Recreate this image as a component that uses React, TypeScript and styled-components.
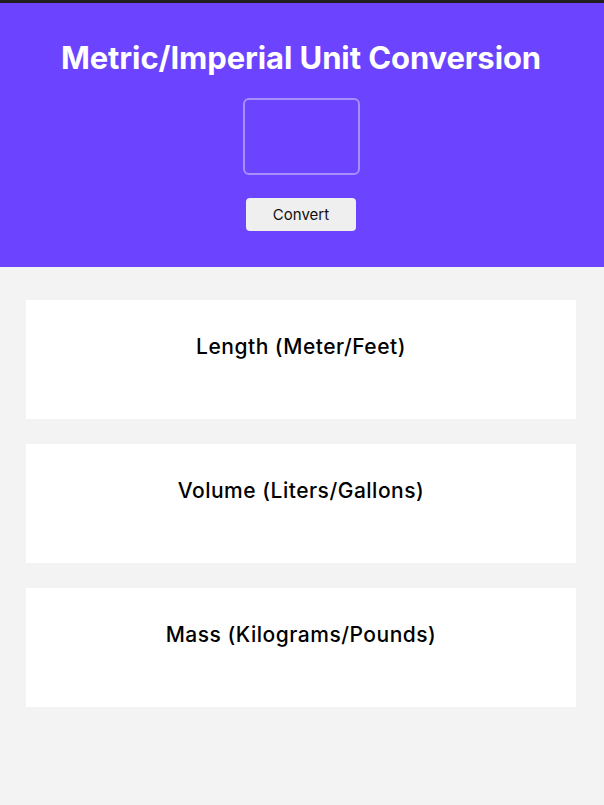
import React from "react";
import styled, { createGlobalStyle } from "styled-components";

const Global = createGlobalStyle`
  html, body { margin: 0; padding: 0; background: #f3f3f3; }
  body { font-family: Inter, "Noto Sans", sans-serif; }
  * { box-sizing: border-box; }
`;

const TopBar = styled.div`
  height: 3px;
  background: #1f1f1f;
`;

const Header = styled.header`
  background: #6c43ff;
  padding: 36px 2px 36px 0;
  display: flex;
  flex-direction: column;
  align-items: center;
`;

const Title = styled.h1`
  margin: 0;
  color: #fff;
  font-family: Inter, sans-serif;
  font-weight: 700;
  font-size: 31px;
  line-height: 37px;
  letter-spacing: -0.1px;
`;

const Input = styled.input`
  margin-top: 22px;
  width: 117px;
  height: 77px;
  background: transparent;
  border: 2px solid rgba(255, 255, 255, 0.4);
  border-radius: 6px;
  outline: none;
  color: #fff;
  font-size: 20px;
  text-align: center;
`;

const Button = styled.button`
  margin-top: 23px;
  width: 110px;
  height: 33px;
  background: #efefef;
  border: none;
  border-radius: 4px;
  font-family: Inter, sans-serif;
  font-size: 15px;
  color: #111;
`;

const Main = styled.main`
  padding: 33px 28px 60px 26px;
  display: flex;
  flex-direction: column;
  gap: 25px;
`;

const Card = styled.section`
  background: #fff;
  height: 119px;
  padding-top: 34px;
  display: flex;
  flex-direction: column;
  align-items: center;
`;

const CardTitle = styled.h2`
  margin: 0;
  font-family: Inter, sans-serif;
  font-weight: 450;
  font-size: 21px;
  line-height: 25px;
  letter-spacing: 0.5px;
  color: #000;
`;

const cards = [
  "Length (Meter/Feet)",
  "Volume (Liters/Gallons)",
  "Mass (Kilograms/Pounds)",
];

export default function App() {
  return (
    <>
      <Global />
      <TopBar />
      <Header>
        <Title>Metric/Imperial Unit Conversion</Title>
        <Input type="text" />
        <Button>Convert</Button>
      </Header>
      <Main>
        {cards.map((c) => (
          <Card key={c}>
            <CardTitle>{c}</CardTitle>
          </Card>
        ))}
      </Main>
    </>
  );
}
